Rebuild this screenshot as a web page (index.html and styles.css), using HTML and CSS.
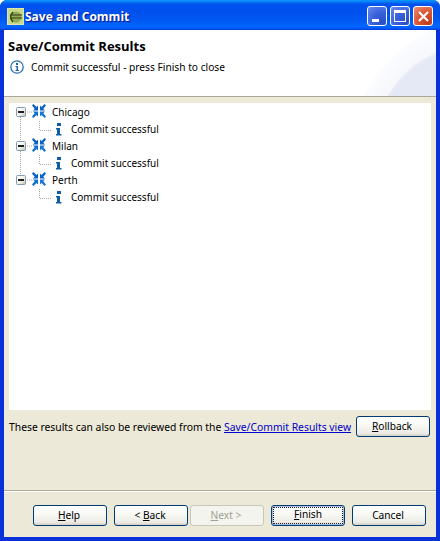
FILE: index.html
```html
<!DOCTYPE html>
<html lang="en">
<head>
<meta charset="utf-8">
<title>Save and Commit</title>
<link rel="stylesheet" href="styles.css">
</head>
<body>
<svg class="defs" width="0" height="0" aria-hidden="true">
  <defs>
    <linearGradient id="boxfill" x1="0" y1="0" x2="1" y2="1">
      <stop offset="0" stop-color="#ffffff"/><stop offset="0.6" stop-color="#f0eee4"/><stop offset="1" stop-color="#c0b99f"/>
    </linearGradient>
    <g id="arrow">
      <path d="M0 1.400L1.400 0 4.500 3.100 6 1.500V6.500H1L2.700 4.800z"/>
    </g>
    <g id="arrows">
      <use href="#arrow" fill="#0a5fc4"/>
      <use href="#arrow" fill="#0a63c8" transform="translate(14 0) scale(-1 1)"/>
      <use href="#arrow" fill="#0f6ed2" transform="translate(0 14) scale(1 -1)"/>
      <use href="#arrow" fill="#1877d8" transform="translate(14 14) scale(-1 -1)"/>
    </g>
    <g id="parent">
      <rect x="0.500" y="3.500" width="9" height="9" rx="1" fill="url(#boxfill)" stroke="#7f9db9"/>
      <rect x="2" y="7" width="6" height="2" fill="#1f1f1f"/>
      <path d="M11 8h5" stroke="#a8a8a0" stroke-dasharray="1 1"/>
      <use href="#arrows" x="16" y="0"/>
    </g>
    <g id="info">
      <path d="M1 0h4v3H1zM0 5h4v6h1.500v1.500H0V11h1V6.500H0z" fill="#0c5ea8"/>
    </g>
  </defs>
</svg>
<div class="window">
  <header class="titlebar">
    <svg class="app-icon" width="17" height="17" viewBox="0 0 17 17">
      <rect width="17" height="17" fill="#dfe5a8"/>
      <rect x="1" y="1" width="15" height="15" fill="#c7d98a"/>
      <circle cx="9" cy="9" r="5.500" fill="#5f8a2a" opacity=".55"/>
      <path d="M3 7h12M3 10h12" stroke="#3b3413" stroke-width="1"/>
      <path d="M6 4C3 7 3 11 6 14" stroke="#2d4410" stroke-width="1.500" fill="none"/>
    </svg>
    <span class="title-text">Save and Commit</span>
    <div class="caption-buttons">
      <span class="cap cap-min"><i class="cap-min-bar"></i></span>
      <span class="cap cap-max"><i class="cap-max-box"></i></span>
      <span class="cap cap-close">
        <svg width="13" height="13" viewBox="0 0 13 13"><path d="M2 2l9 9M11 2l-9 9" stroke="#fff" stroke-width="2.200"/></svg>
      </span>
    </div>
  </header>
  <div class="client">
    <section class="banner">
      <h1 class="banner-title">Save/Commit Results</h1>
      <div class="banner-msg">
        <svg width="14" height="14" viewBox="0 0 14 14">
          <circle cx="7" cy="7" r="6.200" fill="#fff" stroke="#2a70b8" stroke-width="1.300"/>
          <rect x="6" y="3" width="2" height="2" fill="#1d62a8"/>
          <path d="M5.500 6H8v4h1v1H5.500v-1h1V7h-1z" fill="#1d62a8"/>
        </svg>
        <span>Commit successful - press Finish to close</span>
      </div>
    </section>
    <main class="body">
      <div class="tree">
        <div class="guide"></div>
        <div class="node">
          <svg class="node-icon" width="30" height="17" viewBox="0 0 30 17"><use href="#parent"/></svg>
          <span>Chicago</span>
        </div>
        <div class="leaf">
          <svg class="leaf-line" width="12" height="17" viewBox="0 0 12 17"><path d="M0.500 0v9.500H12" fill="none" stroke="#a8a8a0" stroke-dasharray="1 1"/></svg>
          <svg class="leaf-icon" width="6" height="13" viewBox="0 0 6 13"><use href="#info"/></svg>
          <span>Commit successful</span>
        </div>
        <div class="node">
          <svg class="node-icon" width="30" height="17" viewBox="0 0 30 17"><use href="#parent"/></svg>
          <span>Milan</span>
        </div>
        <div class="leaf">
          <svg class="leaf-line" width="12" height="17" viewBox="0 0 12 17"><path d="M0.500 0v9.500H12" fill="none" stroke="#a8a8a0" stroke-dasharray="1 1"/></svg>
          <svg class="leaf-icon" width="6" height="13" viewBox="0 0 6 13"><use href="#info"/></svg>
          <span>Commit successful</span>
        </div>
        <div class="node">
          <svg class="node-icon" width="30" height="17" viewBox="0 0 30 17"><use href="#parent"/></svg>
          <span>Perth</span>
        </div>
        <div class="leaf">
          <svg class="leaf-line" width="12" height="17" viewBox="0 0 12 17"><path d="M0.500 0v9.500H12" fill="none" stroke="#a8a8a0" stroke-dasharray="1 1"/></svg>
          <svg class="leaf-icon" width="6" height="13" viewBox="0 0 6 13"><use href="#info"/></svg>
          <span>Commit successful</span>
        </div>
      </div>
      <div class="review">
        <span class="review-text">These results can also be reviewed from the <a class="link" href="#">Save/Commit Results view</a></span>
        <button class="btn" type="button"><u>R</u>ollback</button>
      </div>
    </main>
    <footer class="actions">
      <button class="btn" type="button"><u>H</u>elp</button>
      <button class="btn gap-small" type="button">&lt; <u>B</u>ack</button>
      <button class="btn btn-disabled" type="button" disabled><u>N</u>ext &gt;</button>
      <button class="btn btn-default" type="button"><span class="focus"><u>F</u>inish</span></button>
      <button class="btn" type="button">Cancel</button>
    </footer>
  </div>
</div>
</body>
</html>
```

FILE: styles.css
```css
* { box-sizing: border-box; }
html, body { margin: 0; padding: 0; }
body {
  width: 440px;
  height: 541px;
  overflow: hidden;
  background: #fff;
  font-family: "Noto Sans", "DejaVu Sans", sans-serif;
  font-size: 10.2px;
  color: #000;
}
.defs { position: absolute; }
.window {
  width: 440px;
  height: 541px;
  display: flex;
  flex-direction: column;
  border-radius: 7px 7px 0 0;
  overflow: hidden;
  background: #0831d9;
}
.titlebar {
  height: 30px;
  flex: none;
  display: flex;
  align-items: center;
  padding: 2px 7px 0 7px;
  background: linear-gradient(180deg, #0997ff 0, #0a7bf4 2px, #0053ee 4px, #0050ee 12px, #0058f0 20px, #0066ff 26px, #005bff 28px, #003dd7 30px);
}
.app-icon { flex: none; }
.title-text {
  margin-left: 1px;
  font-family: "Open Sans", "Noto Sans", sans-serif;
  font-weight: 700;
  font-size: 12px;
  color: #fff;
  text-shadow: 1px 1px 1px #0f1089;
}
.caption-buttons {
  margin-left: auto;
  display: flex;
  gap: 3px;
}
.cap {
  width: 20px;
  height: 20px;
  border: 1px solid #fff;
  border-radius: 3px;
  display: flex;
  align-items: center;
  justify-content: center;
  background: radial-gradient(circle at 80% 85%, #2a4fc4 0, #3a63dc 50%, #6a8cf0 100%);
}
.cap-min { align-items: flex-end; justify-content: flex-start; padding: 0 0 3px 4px; }
.cap-min-bar { width: 7px; height: 3px; background: #fff; display: block; }
.cap-max-box { width: 12px; height: 12px; border: 1px solid #fff; border-top-width: 3px; display: block; }
.cap-close { background: radial-gradient(circle at 80% 85%, #c03a18 0, #dc5a38 55%, #ec9478 100%); }
.client {
  flex: 1;
  margin: 0 4px 4px;
  display: flex;
  flex-direction: column;
  background: #ece9d8;
  min-height: 0;
}
.banner {
  height: 67px;
  flex: none;
  padding: 7px 4px 0 4px;
  border-bottom: 1px solid #aca899;
  background:
    radial-gradient(circle 103px at 473px 117px, #e3e8f5 0, #e5e9f6 97%, #eceff9 100%, transparent 100%),
    radial-gradient(circle 143px at 486px 131px, #edf0f9 0, #f1f3fa 70%, #fbfcfe 99%, transparent 100%),
    #fff;
}
.banner-title {
  margin: 0;
  font-family: "Open Sans", "Noto Sans", sans-serif;
  font-size: 13px;
  line-height: 18px;
  font-weight: 700;
}
.banner-msg {
  margin-top: 5px;
  padding-left: 2px;
  display: flex;
  align-items: center;
  gap: 7px;
  line-height: 14px;
}
.body {
  flex: 1;
  display: flex;
  flex-direction: column;
  padding: 6px 5px 0 5px;
  min-height: 0;
  border-bottom: 1px solid #aca899;
}
.tree {
  position: relative;
  height: 307px;
  flex: none;
  padding-top: 1px;
  background: #fff;
}
.guide {
  position: absolute;
  left: 11px;
  top: 13px;
  height: 58px;
  border-left: 1px dotted #a8a8a0;
}
.node, .leaf {
  height: 17px;
  display: flex;
  align-items: center;
  position: relative;
  white-space: nowrap;
  font-size: 10px;
}
.node span, .leaf span { padding-bottom: 2px; }
.node { padding-left: 7px; }
.node-icon { flex: none; margin-right: 6px; }
.leaf { padding-left: 30px; }
.leaf-line { flex: none; margin-right: 5px; }
.leaf-icon { flex: none; margin-right: 9px; }
.review {
  height: 21px;
  margin-top: 6px;
  display: flex;
  align-items: center;
  justify-content: space-between;
  padding-right: 1px;
}
.review-text { white-space: nowrap; font-size: 10.35px; }
.link { color: #0000c8; text-decoration: underline; }
.actions {
  height: 46px;
  flex: none;
  padding: 13px 0 0 29px;
  display: flex;
  gap: 7px;
  border-top: 1px solid #fff;
}
.btn {
  width: 74px;
  height: 21px;
  flex: none;
  padding: 0 2px 2px 0;
  font: inherit;
  color: #000;
  border: 1px solid #003c74;
  border-radius: 3px;
  background: linear-gradient(180deg, #fff 0, #f8f8f4 45%, #ecebe5 85%, #d6d0c5 100%);
}
.gap-small { margin-right: -5px; }
.btn-disabled {
  color: #a1a192;
  border-color: #c9c7ba;
  background: #f4f4ee;
}
.btn-default {
  box-shadow: inset 0 0 0 1px #a6bde8;
  padding: 1px;
}
.focus {
  display: block;
  height: 100%;
  line-height: 13px;
  border: 1px dotted #222;
}
```
